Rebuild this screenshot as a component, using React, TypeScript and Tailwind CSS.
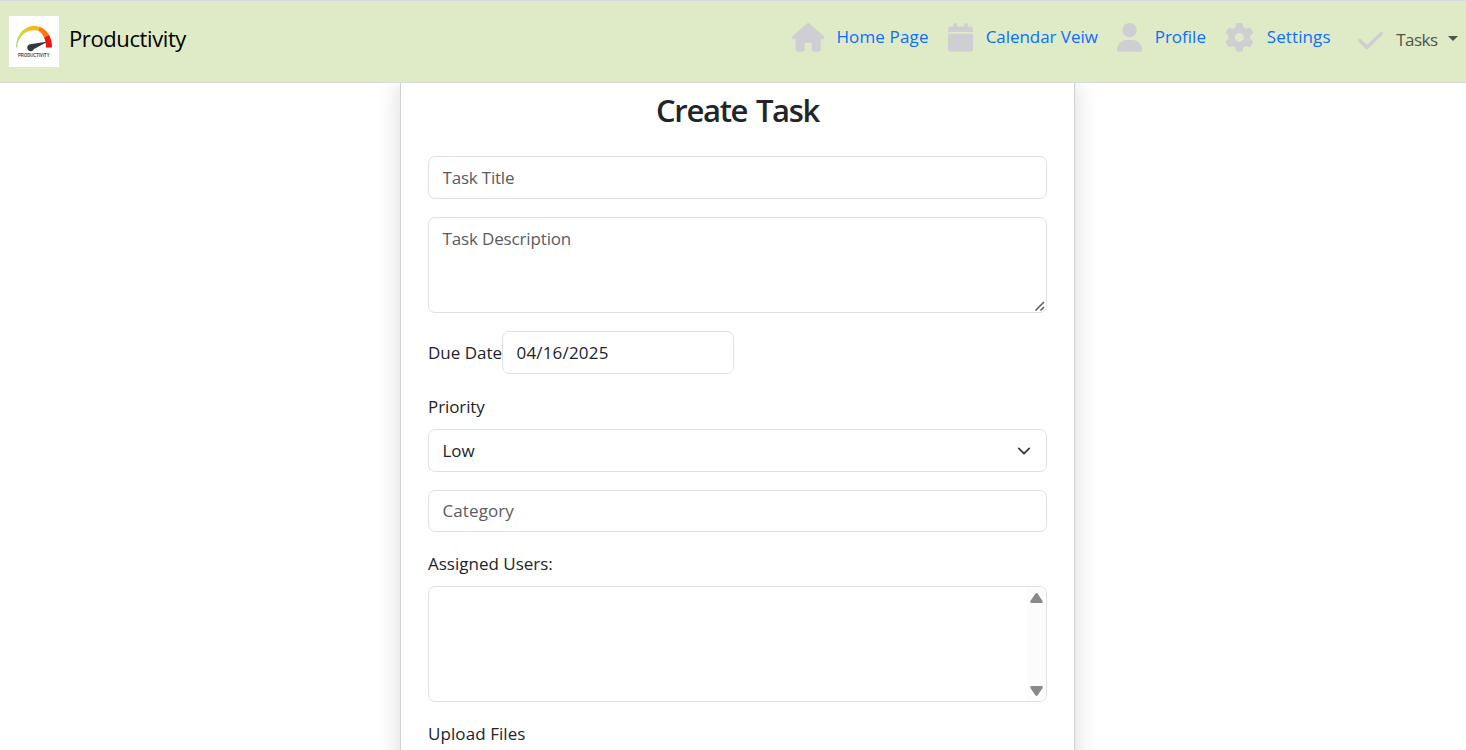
import type { ReactNode } from "react";
import { FaCalendar, FaCheck, FaGear, FaHouse, FaUser } from "react-icons/fa6";

function Logo() {
  return (
    <svg viewBox="0 0 50 51" className="h-[51px] w-[50px] shrink-0 overflow-visible bg-white" role="img">
      <defs>
        <linearGradient id="gauge" x1="0" x2="1" y1="0" y2="0">
          <stop offset="0" stopColor="#9fdc6a" />
          <stop offset="0.3" stopColor="#cbe02c" />
          <stop offset="0.6" stopColor="#f8b820" />
        </linearGradient>
      </defs>
      <path d="M7 31.500C7 19 14.500 10 25.500 9.700L30.500 10.700L29.300 14.800C19 12 9 19 8 31.500Z" fill="url(#gauge)" />
      <path d="M30.500 10.700C35 12.300 38 15 40 18.800L35 21.500C33.500 18 31.500 16 29.300 14.800Z" fill="#fb7a0c" />
      <path d="M40 18.800C42 22.500 43 27 43 31.500H37C37 28 36.500 24.500 35 21.500Z" fill="#f51410" />
      <path d="M39 25.500L21 28.300A3.500 3.500 0 1 0 25 33Z" fill="#343a3c" />
      <text x="9" y="41" textLength="31.500" lengthAdjust="spacingAndGlyphs" fontFamily="Liberation Sans, sans-serif" fontSize="5.500" fontWeight="700" fill="#4a4a4a">PRODUCTIVITY</text>
    </svg>
  );
}

function NavItem({ icon, className, children }: { icon: ReactNode; className: string; children: ReactNode }) {
  return (
    <a href="#" className={`flex h-[29px] items-center whitespace-nowrap ${className}`}>
      <span className="mr-3 text-[#cfced3]">{icon}</span>
      {children}
    </a>
  );
}

const field = "block w-full rounded-[7px] border border-[#dee2e6] bg-white px-[13.5px] placeholder:text-[#595c5f] outline-none";

export default function App() {
  return (
    <div className="flex h-[750px] flex-col overflow-hidden bg-white font-['Open_Sans',sans-serif] text-[17px] leading-[27px] text-[#212529]">
      <header className="relative flex h-[83px] shrink-0 items-start border-y border-[#d9dbdc] bg-[#dfebc6]">
        <a href="#" className="ml-[9px] mt-[15px] flex">
          <Logo />
          <span className="ml-[10px] mt-[8px] text-[22px] leading-[28px] tracking-[-0.400px] text-black">Productivity</span>
        </a>
        <nav className="ml-auto mr-[8px] mt-[22px] flex text-[#0d6efd]">
          <NavItem className="w-[155.500px] tracking-[0.150px]" icon={<FaHouse className="h-[28.800px] w-[32.400px]" />}><span className="-mt-[2px]">Home Page</span></NavItem>
          <NavItem className="w-[169.500px] tracking-[-0.050px]" icon={<FaCalendar className="h-[28.800px] w-[25.200px]" />}><span className="-mt-[2px] ml-[1px]">Calendar Veiw</span></NavItem>
          <NavItem className="w-[108px]" icon={<FaUser className="h-[28.800px] w-[25.200px]" />}><span className="-mt-[2px] ml-[0.500px]">Profile</span></NavItem>
          <NavItem className="w-[133px] tracking-[0.100px]" icon={<FaGear className="h-[28.800px] w-[28.800px]" />}><span className="-mt-[2px] ml-[1px]">Settings</span></NavItem>
          <NavItem className="mt-[3px] w-[100px] tracking-[-0.500px] text-[#50554a]" icon={<FaCheck className="h-[28.800px] w-[25.200px]" />}>
            <span className="-mt-[2px] ml-[1px]">Tasks</span>
            <svg viewBox="0 0 10 5" className="-mt-[4px] ml-auto h-[5px] w-[10px]" fill="currentColor"><path d="M0 0H10L5 5Z" /></svg>
          </NavItem>
        </nav>
      </header>
      <main className="flex min-h-0 flex-1 justify-center overflow-hidden pl-[9px]">
        <form className="h-[720px] w-[675px] shrink-0 border-x border-[#ced0d1] px-[27px] shadow-[0_0_23px_rgba(0,0,0,0.15)]">
          <h2 className="mt-[8px] text-center text-[31px] font-semibold leading-[38px] tracking-[-1.300px] [word-spacing:2px]">Create Task</h2>
          <input className={`${field} mt-[27px] h-[43px] tracking-[-0.200px]`} placeholder="Task Title" />
          <div className="relative mt-[18px]">
            <textarea className={`${field} h-[96px] resize-none py-[7px] tracking-[-0.150px]`} placeholder="Task Description" />
            <svg viewBox="0 0 10 10" className="absolute bottom-[2px] right-[2px] size-[10px]" fill="none" stroke="#5c5c5c" strokeWidth="1.500"><path d="M.5 9.500L9 1M5.500 9.500L9 6" /></svg>
          </div>
          <div className="mt-[18px] flex items-center">
            <label className="w-[74px] whitespace-nowrap">Due Date</label>
            <div className="w-[232px]"><input className={`${field} h-[43px] tracking-[0.180px]`} defaultValue="04/16/2025" /></div>
          </div>
          <label className="mt-[19px] block tracking-[-0.100px]">Priority</label>
          <div className="mt-[9px] flex h-[43px] items-center justify-between rounded-[7px] border border-[#dee2e6] pl-[13.500px] pr-[13.500px]">
            Low
            <svg viewBox="0 0 16 16" className="mr-[2px] size-[14px]" fill="none" stroke="#343a40" strokeWidth="2" strokeLinecap="round" strokeLinejoin="round"><path d="m2 5 6 6 6-6" /></svg>
          </div>
          <input className={`${field} mt-[18px] h-[42px] pb-[2px] tracking-[0.100px]`} placeholder="Category" />
          <label className="mt-[18px] block">Assigned Users:</label>
          <div className="mt-[9px] flex h-[116px] justify-end overflow-hidden rounded-[7px] border border-[#dee2e6]">
            <div className="flex w-[19px] flex-col items-center justify-between bg-[#fcfcfc] pb-[5px] pt-[6px]">
              <svg viewBox="0 0 13 10" className="h-[10px] w-[13px]" fill="#8a8a8a"><path d="M5.300.8Q6.500-.6 7.700.8L12.600 8Q13.200 10 11.500 10H1.500Q-.2 10 .4 8Z" /></svg>
              <svg viewBox="0 0 13 10" className="h-[10px] w-[13px] rotate-180" fill="#8a8a8a"><path d="M5.300.8Q6.500-.6 7.700.8L12.600 8Q13.200 10 11.500 10H1.500Q-.2 10 .4 8Z" /></svg>
            </div>
          </div>
          <label className="mt-[18px] block tracking-[0.080px]">Upload Files</label>
        </form>
      </main>
    </div>
  );
}
